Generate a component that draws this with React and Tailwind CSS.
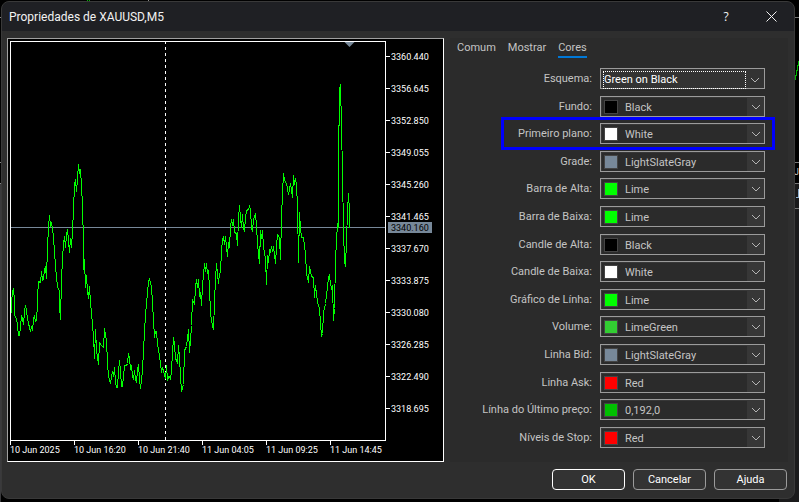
const sans = 'font-[Roboto,sans-serif]';

const prices = ['3360.440', '3356.645', '3352.850', '3349.055', '3345.260', '3341.465', '3337.670', '3333.875', '3330.080', '3326.285', '3322.490', '3318.695'];
const times = ['10 Jun 2025', '10 Jun 16:20', '10 Jun 21:40', '11 Jun 04:05', '11 Jun 09:25', '11 Jun 14:45'];

const series =
  '11,312 11,302 12,292 13,288 14,300 14,315 16,318 17,325 18,335 19,335 20,327 21,315 22,318 23,324 24,311 25,305 26,310 27,318 28,323 30,331 31,326 32,330 33,319 34,315 35,321 36,320 37,303 37,297 38,281 40,282 41,271 42,280 43,279 44,269 45,267 46,278 47,247 48,226 49,215 50,226 51,222 52,228 53,237 54,251 55,265 56,277 57,286 59,291 59,305 60,319 61,280 62,258 63,244 64,236 65,247 66,234 67,229 68,240 69,252 70,238 71,247 72,231 73,208 74,185 75,179 76,191 77,178 78,164 79,172 80,170 81,184 82,207 83,242 83,269 84,259 85,287 86,275 87,291 88,298 89,286 90,303 91,312 92,325 93,335 94,358 95,329 96,350 98,364 99,342 101,345 103,347 104,328 105,335 106,340 107,363 108,376 110,383 111,376 112,371 113,376 114,367 115,382 116,387 117,387 118,371 119,360 120,371 121,386 122,386 123,376 124,365 126,365 127,363 128,353 129,358 130,368 131,366 132,375 133,379 134,370 135,378 136,382 137,370 138,364 139,378 140,388 141,380 142,370 143,350 144,331 145,315 146,303 147,293 148,281 149,279 151,286 152,303 153,320 154,337 155,331 156,331 157,343 159,355 160,363 161,372 162,367 164,374 165,378 166,365 167,380 168,376 169,376 170,379 171,370 172,352 173,337 174,344 175,358 177,362 178,345 179,357 180,376 181,391 183,384 184,350 185,348 186,346 187,338 188,329 189,352 190,340 191,325 192,299 194,304 195,287 196,279 197,287 198,279 199,296 200,292 201,305 202,285 204,263 205,271 206,263 207,273 208,270 209,288 210,313 212,326 213,329 214,302 215,278 216,263 218,283 219,273 220,272 221,250 222,240 223,236 224,244 225,236 227,256 228,242 229,247 230,226 231,219 232,225 233,219 234,232 236,233 237,245 238,218 239,205 240,218 241,227 242,214 243,228 244,230 245,217 246,210 248,209 249,206 250,209 251,227 252,231 253,219 255,213 256,226 257,243 259,263 260,230 261,238 262,230 263,247 265,258 266,284 267,255 268,262 269,249 270,252 271,246 272,251 273,246 275,263 276,246 277,234 279,237 280,259 281,218 282,192 283,173 284,180 286,183 288,194 290,183 292,197 293,175 294,184 295,178 296,185 297,205 298,262 299,212 300,228 301,237 303,237 305,253 306,273 308,282 309,266 311,276 313,277 314,297 315,285 317,302 319,308 320,323 321,336 322,333 323,312 325,303 327,286 328,277 329,275 330,283 331,288 332,285 333,320 334,308 335,260 336,240 337,223 338,227 338,162 339,90 340,84 341,126 342,173 343,230 344,260 345,266 346,241 347,210 348,193 349,211 349,227';

const rows = [
  { id: 'fundo', label: 'Fundo', value: 'Black', swatch: 'bg-black' },
  { id: 'primeiro', label: 'Primeiro plano', value: 'White', swatch: 'bg-white', marked: true },
  { id: 'grade', label: 'Grade', value: 'LightSlateGray', swatch: 'bg-[#778899]' },
  { id: 'barra-alta', label: 'Barra de Alta', value: 'Lime', swatch: 'bg-[#00ff00]' },
  { id: 'barra-baixa', label: 'Barra de Baixa', value: 'Lime', swatch: 'bg-[#00ff00]' },
  { id: 'candle-alta', label: 'Candle de Alta', value: 'Black', swatch: 'bg-black' },
  { id: 'candle-baixa', label: 'Candle de Baixa', value: 'White', swatch: 'bg-white' },
  { id: 'grafico', label: 'Gráfico de Línha', value: 'Lime', swatch: 'bg-[#00ff00]' },
  { id: 'volume', label: 'Volume', value: 'LimeGreen', swatch: 'bg-[#32cd32]' },
  { id: 'bid', label: 'Linha Bid', value: 'LightSlateGray', swatch: 'bg-[#778899]' },
  { id: 'ask', label: 'Linha Ask', value: 'Red', swatch: 'bg-[#ff0000]' },
  { id: 'ultimo', label: 'Línha do Último preço', value: '0,192,0', swatch: 'bg-[#00c000]' },
  { id: 'stop', label: 'Níveis de Stop', value: 'Red', swatch: 'bg-[#ff0000]' },
];

function PriceChart() {
  return (
    <svg
      viewBox="8 39 435 422"
      className="block h-full w-full font-[Roboto,sans-serif] text-[9px]"
      role="img"
      aria-label="XAUUSD,M5"
    >
      <g fill="none" shapeRendering="crispEdges">
        <path d="M10.5 440.5V41.5H385.5V440.5Z" stroke="#fff" />
        <path d="M11 227.5H385" stroke="#778899" />
        <path d="M165.5 41V440" stroke="#fff" strokeDasharray="3 3" />
        <polyline points={series} transform="translate(0.5 0.5)" stroke="#00ff00" />
        {prices.map((p, i) => (
          <path key={p} d={`M386 ${56.5 + i * 32}h4`} stroke="#fff" />
        ))}
        {times.map((t, i) => (
          <path key={t} d={`M${10.5 + i * 64} 441v4`} stroke="#fff" />
        ))}
      </g>
      <path d="M344.5 42H354.5L349.5 47Z" fill="#778899" />
      {prices.map((p, i) => (
        <text key={p} x="391" y={60 + i * 32} fill="#fff">{p}</text>
      ))}
      <rect x="388" y="222" width="44" height="11" fill="#778899" />
      <text x="391" y="231" fill="#000">3340.160</text>
      {times.map((t, i) => (
        <text key={t} x={10 + i * 64} y="453" fill="#fff">{t}</text>
      ))}
    </svg>
  );
}

function Chevron() {
  return (
    <svg
      viewBox="0 0 10 6"
      className="pointer-events-none col-start-1 row-start-1 mr-0.5 h-1.5 w-2.5 self-center justify-self-end"
      fill="none"
      stroke="#b4b4b4"
      aria-hidden="true"
    >
      <path d="M1 1L5 5L9 1" />
    </svg>
  );
}

function ColorRow({ id, label, value, swatch, marked }) {
  return (
    <div className="relative flex items-center justify-end gap-2">
      <label htmlFor={id} className="pt-px text-[#c4c4c4]">{label}:</label>
      <div className="grid h-[21px] w-[165px] border border-[#9b9b9b] bg-[#373737] p-px">
        <select
          id={id}
          defaultValue={value}
          className="col-start-1 row-start-1 mr-4 appearance-none bg-[#2b2b2b] pt-0.5 pl-[23px] text-[#c4c4c4] outline-none"
        >
          <option>{value}</option>
        </select>
        <span className={`pointer-events-none col-start-1 row-start-1 ml-0.5 h-3.5 w-3.5 self-center border border-[#444] ${swatch}`} />
        <Chevron />
      </div>
      {marked && (
        <span className="pointer-events-none absolute -top-1.5 -right-2.5 -bottom-1.5 left-[44px] border-3 border-[#0000ff]" />
      )}
    </div>
  );
}

export default function App() {
  return (
    <div className={`relative h-screen bg-black pt-px pr-1 pb-[3px] pl-px text-[11px] leading-4 ${sans}`}>
      <svg className="absolute top-0 right-0 h-[502px] w-5" viewBox="779 0 20 502" aria-hidden="true">
        <rect x="779" y="184" width="20" height="318" fill="#1a1a1b" />
        <path d="M779 17.5H799M779 162.5H799M779 183.5H799M779 208.5H799" stroke="#777" shapeRendering="crispEdges" />
        <path d="M794.5 85V79H795.5V75H796.5V70H797.5V65H798.5V61" fill="none" stroke="#00b400" shapeRendering="crispEdges" />
        <text x="794" y="175" fill="#ccc" fontSize="9">J</text>
        <path d="M798.5 189V197H796" fill="none" stroke="#8fb0d0" shapeRendering="crispEdges" />
      </svg>
      <svg className="absolute top-0 left-0 h-[502px] w-40" viewBox="0 0 160 502" aria-hidden="true" shapeRendering="crispEdges">
        <path d="M87 0.5H88M89 0.5H90" stroke="#00b400" />
        <path d="M148 0.5H149M0 17.5H1M0 162.5H1M0 183.5H1M0 208.5H1M0 237.5H1M0 246.5H1M0 266.5H1M0 277.5H1" stroke="#888" />
        <rect x="0" y="184" width="1" height="318" fill="#3a3a3c" />
      </svg>
      <div className="relative flex h-full flex-col overflow-hidden rounded-lg border border-[#393939] bg-[#2e2e2e]">
        <header className="flex h-[29px] shrink-0 items-center bg-[#1f2024] pl-[7px] text-[#f2f2f2]">
          <h1 className="flex-1 text-xs">Propriedades de XAUUSD,M5</h1>
          <button type="button" aria-label="Ajuda contextual" className="w-[46px] font-['Open_Sans',sans-serif] text-xs">?</button>
          <button type="button" aria-label="Fechar" className="flex w-[45px] justify-center">
            <svg viewBox="0 0 11 11" className="h-[11px] w-[11px]" stroke="#f2f2f2" aria-hidden="true">
              <path d="M0.5 0.5L10.5 10.5M10.5 0.5L0.5 10.5" />
            </svg>
          </button>
        </header>
        <main className="flex h-[431px] pt-[7px] pr-1.5 pl-[5px]">
          <div className="min-w-0 flex-1 border border-t-[#a0a0a0] border-r-white border-b-white border-l-[#a0a0a0] bg-black">
            <PriceChart />
          </div>
          <section className="ml-1.5 flex w-[338px] flex-col bg-[#2b2b2b] pt-0.5 pr-[23px] pb-3.5 pl-[7px]">
            <nav className="flex gap-3 text-[#c4c4c4]">
              <a href="#comum">Comum</a>
              <a href="#mostrar">Mostrar</a>
              <a href="#cores" aria-current="page" className="border-b-2 border-[#0078d7]">Cores</a>
            </nav>
            <div className="mt-2.5 flex flex-1 flex-col justify-between">
              <div className="flex items-center justify-end gap-2">
                <label htmlFor="esquema" className="text-[#c4c4c4]">Esquema:</label>
                <div className="grid h-[21px] w-[165px] border border-[#9b9b9b] bg-[#333] p-0.5">
                  <select id="esquema" className="col-start-1 row-start-1 mr-4 appearance-none border border-dotted border-white text-white outline-none">
                    <option>Green on Black</option>
                  </select>
                  <Chevron />
                </div>
              </div>
              {rows.map((r) => (
                <ColorRow key={r.id} {...r} />
              ))}
            </div>
          </section>
        </main>
        <footer className="flex justify-end gap-2 pt-[7px] pr-[7px] text-[11px] text-white">
          <button type="button" className="h-[21px] w-[73px] rounded border border-white bg-[#333]">OK</button>
          <button type="button" className="h-[21px] w-[73px] rounded border border-[#9b9b9b] bg-[#333]">Cancelar</button>
          <button type="button" className="h-[21px] w-[73px] rounded border border-[#9b9b9b] bg-[#333]">Ajuda</button>
        </footer>
      </div>
    </div>
  );
}
